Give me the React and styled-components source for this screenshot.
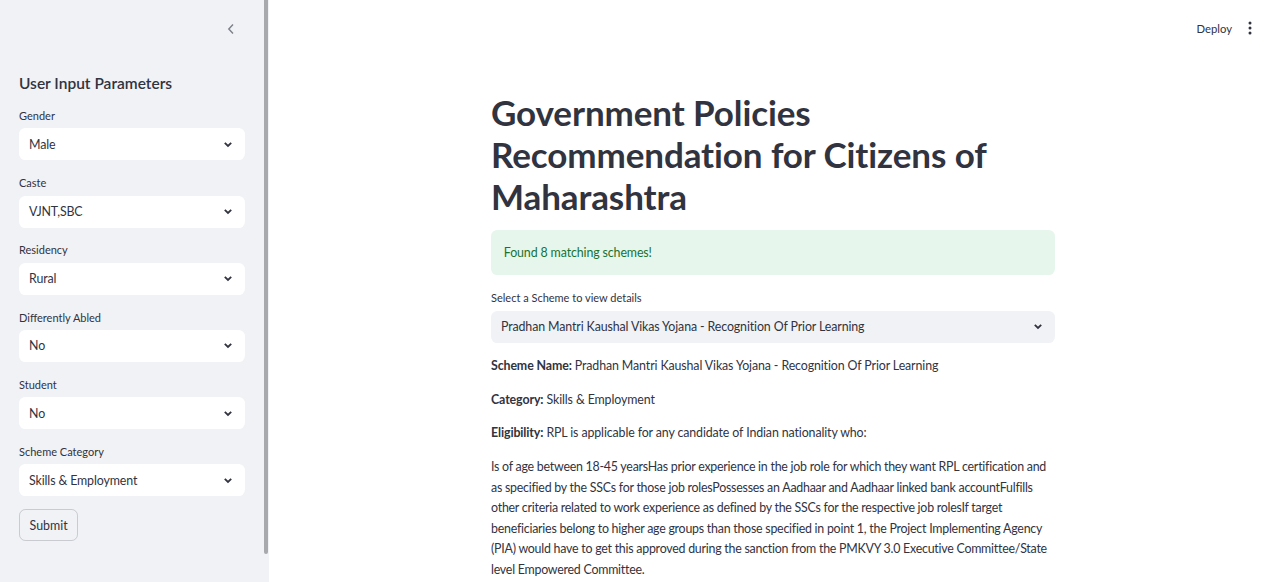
import React from "react";
import styled, { createGlobalStyle } from "styled-components";

const GlobalStyle = createGlobalStyle`
  html, body {
    margin: 0;
    padding: 0;
    background: #ffffff;
    overflow: hidden;
  }
  body {
    font-family: "Lato", "Noto Sans", sans-serif;
    color: #31333f;
  }
  * {
    box-sizing: border-box;
  }
`;

const Page = styled.div`
  display: flex;
  width: 1280px;
  height: 582px;
  overflow: hidden;
`;

const Sidebar = styled.aside`
  position: relative;
  width: 269px;
  flex-shrink: 0;
  background: #f0f2f6;
  padding: 0 24px 0 19px;
  display: flex;
  flex-direction: column;
`;

const Scrollbar = styled.div`
  position: absolute;
  top: 0;
  right: 1px;
  width: 4px;
  height: 554px;
  border-radius: 0 0 2px 2px;
  background: #a8a9ad;
`;

const CollapseRow = styled.div`
  height: 58px;
  display: flex;
  justify-content: flex-end;
  align-items: center;
  padding-right: 9px;
  color: rgba(49, 51, 63, 0.6);
`;

const SideHeading = styled.h2`
  margin: 16px 0 13px;
  font-size: 15.5px;
  font-weight: 600;
  line-height: 19px;
`;

const Field = styled.div`
  display: flex;
  flex-direction: column;
  margin-bottom: ${(p) => (p.$flush ? "0" : "12.8px")};
`;

const Label = styled.label`
  font-size: 11px;
  line-height: 19.2px;
  margin-bottom: 3.2px;
  color: #31333f;
`;

const SelectBox = styled.div`
  height: 32px;
  display: flex;
  align-items: center;
  justify-content: space-between;
  padding: 0 12px 0 10px;
  background: ${(p) => (p.$tone === "grey" ? "#f0f2f6" : "#ffffff")};
  border-radius: 6.4px;
  font-size: 12.4px;
  letter-spacing: -0.12px;
  color: #31333f;
`;

const Button = styled.button`
  align-self: flex-start;
  height: 32px;
  padding: 0 9.6px;
  border: 1px solid rgba(49, 51, 63, 0.2);
  border-radius: 6.4px;
  background: transparent;
  font-family: inherit;
  font-size: 12.4px;
  color: #31333f;
`;

const Main = styled.main`
  position: relative;
  flex: 1;
  display: flex;
  flex-direction: column;
`;

const Header = styled.header`
  height: 56px;
  display: flex;
  justify-content: flex-end;
  align-items: center;
  gap: 16px;
  padding-right: 28px;
  font-size: 11.3px;
  color: #31333f;
`;

const Content = styled.div`
  width: 564px;
  margin-left: 222px;
  padding-top: 35px;
  display: flex;
  flex-direction: column;
  gap: 13.2px;
`;

const Title = styled.h1`
  margin: 0;
  font-size: 35px;
  font-weight: 700;
  line-height: 42px;
  color: #31333f;
  letter-spacing: -0.1px;
`;

const Alert = styled.div`
  height: 45px;
  display: flex;
  align-items: center;
  padding: 0 12.8px;
  border-radius: 6.4px;
  background: #e6f6ec;
  color: #177233;
  font-size: 12.4px;
  letter-spacing: -0.12px;
`;

const Para = styled.p`
  margin: 0;
  font-size: 12.4px;
  letter-spacing: ${(p) => (p.$tight ? "-0.24px" : "-0.12px")};
  line-height: 20.5px;
  color: #31333f;
`;

const Strong = styled.b`
  font-weight: 700;
`;

function Chevron() {
  return (
    <svg width="10" height="7" viewBox="0 0 10 7">
      <path d="M1.8 1.8 L5 5 L8.2 1.8" fill="none" stroke="#31333f" strokeWidth="1.8" />
    </svg>
  );
}

function Select({ value, tone }) {
  return (
    <SelectBox $tone={tone}>
      <span>{value}</span>
      <Chevron />
    </SelectBox>
  );
}

const fields = [
  ["Gender", "Male"],
  ["Caste", "VJNT,SBC"],
  ["Residency", "Rural"],
  ["Differently Abled", "No"],
  ["Student", "No"],
  ["Scheme Category", "Skills & Employment"],
];

export default function App() {
  return (
    <>
      <GlobalStyle />
      <Page>
        <Sidebar>
          <Scrollbar />
          <CollapseRow>
            <svg width="10" height="12" viewBox="0 0 10 12">
              <path d="M7 1.5 L2.8 6 L7 10.5" fill="none" stroke="currentColor" strokeWidth="1.4" />
            </svg>
          </CollapseRow>
          <SideHeading>User Input Parameters</SideHeading>
          {fields.map(([label, value]) => (
            <Field key={label}>
              <Label>{label}</Label>
              <Select value={value} />
            </Field>
          ))}
          <Button>Submit</Button>
        </Sidebar>
        <Main>
          <Header>
            <span>Deploy</span>
            <svg width="4" height="14" viewBox="0 0 4 14">
              <circle cx="2" cy="2" r="1.5" fill="#31333f" />
              <circle cx="2" cy="7" r="1.5" fill="#31333f" />
              <circle cx="2" cy="12" r="1.5" fill="#31333f" />
            </svg>
          </Header>
          <Content>
            <Title>
              Government Policies Recommendation for Citizens of Maharashtra
            </Title>
            <Alert>Found 8 matching schemes!</Alert>
            <Field $flush>
              <Label>Select a Scheme to view details</Label>
              <Select
                tone="grey"
                value="Pradhan Mantri Kaushal Vikas Yojana - Recognition Of Prior Learning"
              />
            </Field>
            <Para>
              <Strong>Scheme Name:</Strong> Pradhan Mantri Kaushal Vikas Yojana -
              Recognition Of Prior Learning
            </Para>
            <Para>
              <Strong>Category:</Strong> Skills &amp; Employment
            </Para>
            <Para>
              <Strong>Eligibility:</Strong> RPL is applicable for any candidate of
              Indian nationality who:
            </Para>
            <Para $tight>
              Is of age between 18-45 yearsHas prior experience in the job role for
              which they want RPL certification and as specified by the SSCs for
              those job rolesPossesses an Aadhaar and Aadhaar linked bank
              accountFulfills other criteria related to work experience as defined
              by the SSCs for the respective job rolesIf target beneficiaries belong
              to higher age groups than those specified in point 1, the Project
              Implementing Agency (PIA) would have to get this approved during the
              sanction from the PMKVY 3.0 Executive Committee/State level Empowered
              Committee.
            </Para>
          </Content>
        </Main>
      </Page>
    </>
  );
}
